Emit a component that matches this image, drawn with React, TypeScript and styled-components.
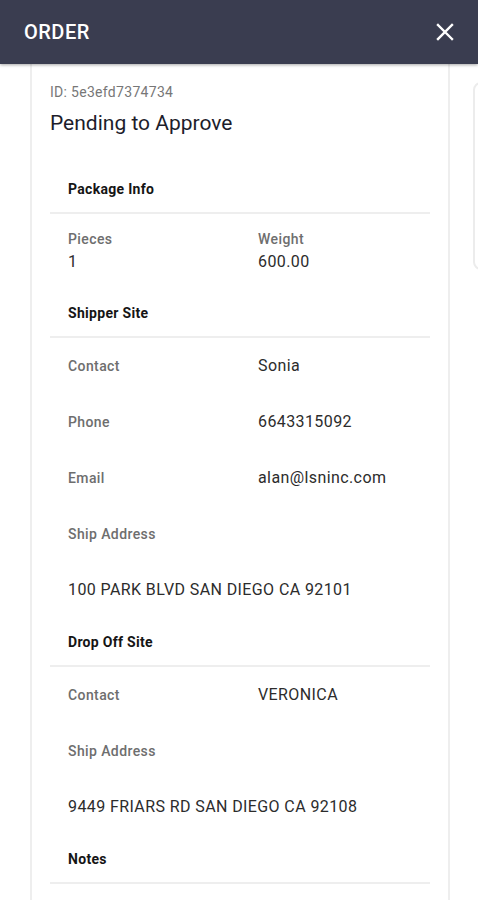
import React from 'react';
import styled, { createGlobalStyle } from 'styled-components';

const GlobalStyle = createGlobalStyle`
  body {
    margin: 0;
    background: #fff;
    font-family: Roboto, 'Noto Sans', Arial, sans-serif;
    -webkit-font-smoothing: antialiased;
  }
`;

const Page = styled.div`
  width: 478px;
  height: 900px;
  overflow: hidden;
  display: flex;
  flex-direction: column;
`;

const TopBar = styled.header`
  height: 64px;
  flex-shrink: 0;
  background: #3a3d50;
  display: flex;
  align-items: center;
  justify-content: space-between;
  padding: 0 22px 0 24px;
  box-shadow: 0 1px 3px rgba(0, 0, 0, 0.35);
  position: relative;
  z-index: 2;
`;

const Title = styled.h1`
  margin: 0;
  color: #fff;
  font-size: 20px;
  font-weight: 500;
  letter-spacing: 0.5px;
`;

const CloseButton = styled.button`
  border: 0;
  background: none;
  padding: 0;
  width: 22px;
  height: 22px;
  display: flex;
  align-items: center;
  justify-content: center;
  cursor: pointer;
`;

const Track = styled.div`
  flex: 1;
  display: flex;
  align-items: flex-start;
  gap: 23px;
  padding-left: 30px;
  overflow: hidden;
`;

const Card = styled.section`
  width: 420px;
  min-height: 860px;
  flex-shrink: 0;
  box-sizing: border-box;
  border: 2px solid #eeeeee;
  border-top: 0;
  padding: 20px 18px 0 18px;
`;

const NextCard = styled.div`
  width: 420px;
  height: 188px;
  flex-shrink: 0;
  margin-top: 18px;
  box-sizing: border-box;
  border: 2px solid #ececec;
  border-radius: 8px;
`;

const OrderId = styled.div`
  font-size: 14px;
  line-height: 16px;
  color: #777;
  letter-spacing: 0.3px;
`;

const Status = styled.div`
  margin-top: 11px;
  font-size: 21px;
  line-height: 24px;
  color: #1d1d2b;
`;

const SectionHead = styled.div<{ first?: boolean }>`
  height: 49px;
  margin-top: ${p => (p.first ? '30px' : '0')};
  display: flex;
  align-items: center;
  padding-left: 18px;
  border-bottom: 2px solid #eeeeee;
  box-sizing: border-box;
  font-size: 14px;
  font-weight: 700;
  letter-spacing: 0.3px;
  color: #151515;
`;

const Grid = styled.div`
  display: grid;
  grid-template-columns: 1fr 1fr;
`;

const Cell = styled.div`
  padding: 17px 18px 17px;
  display: flex;
  flex-direction: column;
  gap: 5px;
`;

const Row = styled.div`
  height: 56px;
  display: grid;
  grid-template-columns: 1fr 1fr;
  align-items: center;
`;

const FullRow = styled.div`
  height: 56px;
  display: flex;
  align-items: center;
`;

const Label = styled.div<{ inset?: boolean }>`
  padding-left: ${p => (p.inset ? '0' : '18px')};
  font-size: 14px;
  line-height: 16px;
  font-weight: 500;
  letter-spacing: 0.4px;
  color: #6e6e6e;
`;

const Value = styled.div<{ inset?: boolean }>`
  padding-left: ${p => (p.inset ? '0' : '18px')};
  font-size: 16px;
  line-height: 20px;
  color: #2c2c2c;
  letter-spacing: 0.4px;
`;

type Field = { label: string; value?: string; full?: boolean };

const shipper: Field[] = [
  { label: 'Contact', value: 'Sonia' },
  { label: 'Phone', value: '6643315092' },
  { label: 'Email', value: 'alan@lsninc.com' },
  { label: 'Ship Address' },
  { label: '100 PARK BLVD SAN DIEGO CA 92101', full: true },
];

const dropOff: Field[] = [
  { label: 'Contact', value: 'VERONICA' },
  { label: 'Ship Address' },
  { label: '9449 FRIARS RD SAN DIEGO CA 92108', full: true },
];

const Fields = ({ items }: { items: Field[] }) => (
  <>
    {items.map((f, i) =>
      f.full ? (
        <FullRow key={i}>
          <Value>{f.label}</Value>
        </FullRow>
      ) : (
        <Row key={i}>
          <Label>{f.label}</Label>
          {f.value && <Value>{f.value}</Value>}
        </Row>
      )
    )}
  </>
);

export default function App() {
  return (
    <Page>
      <GlobalStyle />
      <TopBar>
        <Title>ORDER</Title>
        <CloseButton aria-label="close">
          <svg width="18" height="18" viewBox="0 0 18 18">
            <path d="M2 2L16 16M16 2L2 16" stroke="#fff" strokeWidth="2.4" strokeLinecap="square" />
          </svg>
        </CloseButton>
      </TopBar>
      <Track>
        <Card>
          <OrderId>ID: 5e3efd7374734</OrderId>
          <Status>Pending to Approve</Status>

          <SectionHead first>Package Info</SectionHead>
          <Grid>
            <Cell>
              <Label inset>Pieces</Label>
              <Value inset>1</Value>
            </Cell>
            <Cell>
              <Label inset>Weight</Label>
              <Value inset>600.00</Value>
            </Cell>
          </Grid>

          <SectionHead>Shipper Site</SectionHead>
          <Fields items={shipper} />

          <SectionHead>Drop Off Site</SectionHead>
          <Fields items={dropOff} />

          <SectionHead>Notes</SectionHead>
        </Card>
        <NextCard />
      </Track>
    </Page>
  );
}
